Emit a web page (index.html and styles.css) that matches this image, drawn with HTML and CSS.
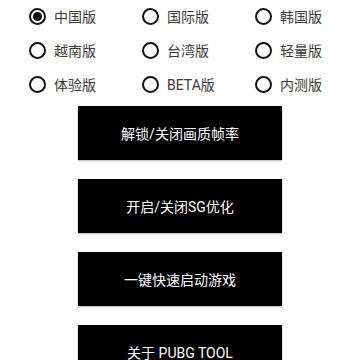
FILE: index.html
```html
<!DOCTYPE html>
<html lang="zh-CN">
<head>
<meta charset="UTF-8">
<title>PUBG TOOL</title>
<link rel="stylesheet" href="styles.css">
</head>
<body>

<div class="app">
  <div class="versions">
    <label class="opt"><input type="radio" name="ver" checked><span class="dot"></span>中国版</label>
    <label class="opt"><input type="radio" name="ver"><span class="dot"></span>国际版</label>
    <label class="opt"><input type="radio" name="ver"><span class="dot"></span>韩国版</label>
    <label class="opt"><input type="radio" name="ver"><span class="dot"></span>越南版</label>
    <label class="opt"><input type="radio" name="ver"><span class="dot"></span>台湾版</label>
    <label class="opt"><input type="radio" name="ver"><span class="dot"></span>轻量版</label>
    <label class="opt"><input type="radio" name="ver"><span class="dot"></span>体验版</label>
    <label class="opt"><input type="radio" name="ver"><span class="dot"></span>BETA版</label>
    <label class="opt"><input type="radio" name="ver"><span class="dot"></span>内测版</label>
  </div>

  <div class="actions">
    <button class="btn">解锁/关闭画质帧率</button>
    <button class="btn">开启/关闭SG优化</button>
    <button class="btn">一键快速启动游戏</button>
    <button class="btn">关于 PUBG TOOL</button>
  </div>
</div>

</body>
</html>
```

FILE: styles.css
```css
body { margin: 0; background: #fff; font-family: Roboto, "Noto Sans CJK SC", sans-serif; overflow: hidden; }
.app { display: flex; flex-direction: column; }
.versions { display: grid; grid-template-columns: 113px 113px 113px; grid-auto-rows: 34px; padding-left: 29px; margin-top: -1px; }
.opt { display: flex; align-items: center; gap: 8px; font-size: 14px; color: #3a3a3a; cursor: pointer; }
.opt input { display: none; }
.dot { width: 13px; height: 13px; border: 2px solid #111; border-radius: 50%; display: flex; align-items: center; justify-content: center; flex: none; }
.opt input:checked + .dot::after { content: ""; width: 9px; height: 9px; border-radius: 50%; background: #111; }
.actions { display: flex; flex-direction: column; align-items: center; gap: 19px; margin-top: 5px; }
.btn { width: 204px; height: 54px; background: #000; color: #fff; border: none; font-family: Roboto, "Noto Sans CJK SC", sans-serif; font-size: 14px; box-shadow: 0 1px 2px rgba(0,0,0,0.3); flex: none; }
```
